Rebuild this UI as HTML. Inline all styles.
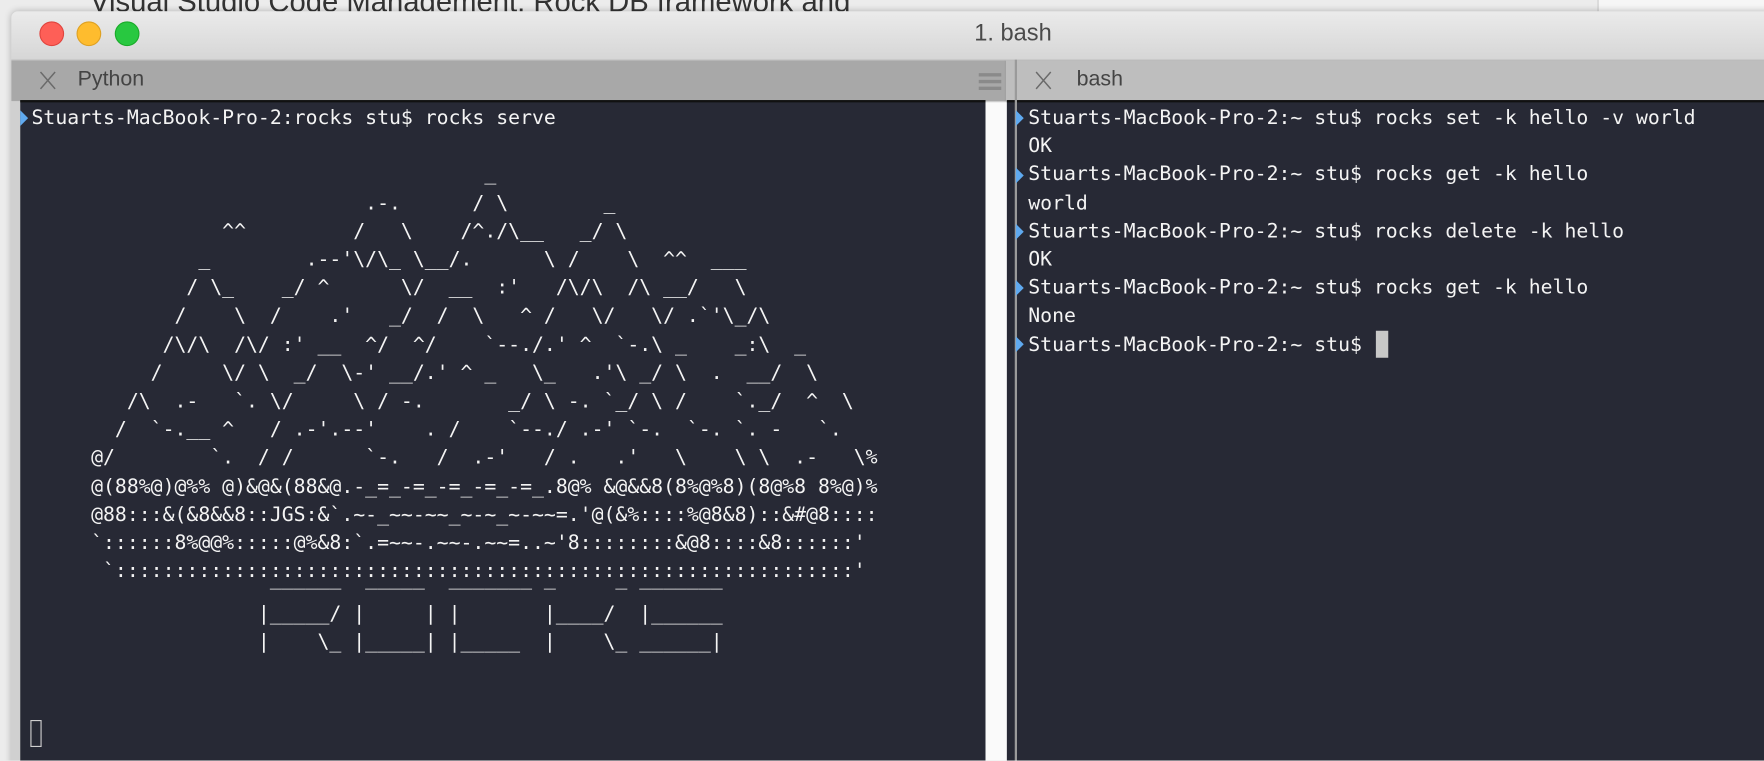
<!DOCTYPE html>
<html><head><meta charset="utf-8">
<style>
html,body{margin:0;padding:0;}
body{width:1764px;height:760px;position:relative;overflow:hidden;background:#ececec;font-family:"Liberation Sans",sans-serif;}
#wrap{position:absolute;left:0;top:0;width:1568px;height:676px;transform:scale(1.125);transform-origin:0 0;overflow:hidden;}
.bgtext{position:absolute;left:80px;top:-14px;font-size:26px;color:#333;white-space:nowrap;}
.bgright{position:absolute;left:1420px;top:0;width:148px;height:12px;background:#f6f6f6;border-left:1px solid #ccc;}
.win{position:absolute;left:10px;top:10px;width:1570px;height:680px;background:#d8d8d8;border-radius:6px 0 0 0;box-shadow:0 0 6px rgba(0,0,0,.25);overflow:hidden;}
.title{position:absolute;left:0;top:0;width:100%;height:43px;background:linear-gradient(#ebebeb,#d6d6d6);border-bottom:1px solid #b5b5b5;}
.tl{position:absolute;top:9px;width:20px;height:20px;border-radius:50%;}
.ttext{position:absolute;left:856px;top:8px;font-size:21px;color:#4a4a4a;}
.tabL{position:absolute;left:0;top:44px;width:883px;height:36px;background:#a8a8a8;}
.tabR{position:absolute;left:883px;top:44px;width:690px;height:36px;background:#bebebe;border-left:1px solid #999;}
.tabtxt{position:absolute;top:6px;font-size:19px;color:#444;}
.x{position:absolute;top:9px;}
.term{position:absolute;top:89px;height:600px;background:#272935;border-top:2px solid #111;}
pre{margin:0;position:absolute;font-family:"DejaVu Sans Mono","Liberation Mono",monospace;font-size:17.6px;line-height:25.2px;color:#f4f4f4;white-space:pre;}
.tri{position:absolute;width:0;height:0;border-top:7px solid transparent;border-bottom:7px solid transparent;border-left:7px solid #5fa9ef;}
</style></head><body>
<div id="wrap">
<div class="bgtext">Visual Studio Code Management: Rock DB framework and</div>
<div class="bgright"></div>
<div class="win">
  <div class="title">
    <div class="tl" style="left:25px;background:#fe5f57;border:1px solid #e0443e"></div>
    <div class="tl" style="left:58px;background:#febc2e;border:1px solid #dea123"></div>
    <div class="tl" style="left:92px;background:#28c840;border:1px solid #1aab29"></div>
    <div class="ttext">1. bash</div>
  </div>
  <div class="tabL">
    <svg class="x" style="left:25px" width="15" height="17"><path d="M1 1L14 16M14 1L1 16" stroke="#6a6a6a" stroke-width="1.3"/></svg>
    <div class="tabtxt" style="left:59px">Python</div>
    <div style="position:absolute;left:860px;top:11px;width:20px;height:3px;background:#8a8a8a;box-shadow:0 6px 0 #8a8a8a,0 12px 0 #8a8a8a"></div>
  </div>
  <div class="tabR">
    <svg class="x" style="left:26px" width="15" height="17"><path d="M1 1L14 16M14 1L1 16" stroke="#6a6a6a" stroke-width="1.3"/></svg>
    <div class="tabtxt" style="left:63px">bash</div>
  </div>
</div>
<div style="position:absolute;left:10px;top:90px;width:8px;height:600px;background:#d0d0d0"></div>
<div class="term" style="left:18px;width:858px"></div>
<div style="position:absolute;left:876px;top:91px;width:19px;height:600px;background:#fafafa"></div>
<div class="term" style="left:895px;width:680px"></div>
<div style="position:absolute;left:902px;top:53px;width:2px;height:640px;background:#9a9a9a"></div>

<div class="tri" style="left:18px;top:98px"></div>
<pre style="left:28px;top:93px">Stuarts-MacBook-Pro-2:rocks stu$ rocks serve

                                      _
                            .-.      / \        _
                ^^         /   \    /^./\__   _/ \
              _        .--'\/\_ \__/.      \ /    \  ^^  ___
             / \_    _/ ^      \/  __  :'   /\/\  /\ __/   \
            /    \  /    .'   _/  /  \   ^ /   \/   \/ .`'\_/\
           /\/\  /\/ :' __  ^/  ^/    `--./.' ^  `-.\ _    _:\  _
          /     \/ \  _/  \-' __/.' ^ _   \_   .'\ _/ \  .  __/  \
        /\  .-   `. \/     \ / -.       _/ \ -. `_/ \ /    `._/  ^  \
       /  `-.__ ^   / .-'.--'    . /    `--./ .-' `-.  `-. `. -   `.
     @/        `.  / /      `-.   /  .-'   / .   .'   \    \ \  .-   \%
     @(88%@)@%% @)&amp;@&amp;(88&amp;@.-_=_-=_-=_-=_-=_.8@% &amp;@&amp;&amp;8(8%@%8)(8@%8 8%@)%
     @88:::&amp;(&amp;8&amp;&amp;8::JGS:&amp;`.~-_~~-~~_~-~_~-~~=.'@(&amp;%::::%@8&amp;8)::&amp;#@8::::
     `::::::8%@@%:::::@%&amp;8:`.=~~-.~~-.~~=..~'8::::::::&amp;@8::::&amp;8::::::'
      `::::::::::::::::::::::::::::::::::::::::::::::::::::::::::::::'</pre>
<pre style="left:28px;top:503px">                    ______  _____  _______ _     _ _______</pre>
<pre style="left:28px;top:534px">                   |_____/ |     | |       |____/  |______
                   |    \_ |_____| |_____  |    \_ ______|</pre>
<div style="position:absolute;left:27px;top:640px;width:8px;height:22px;border:1.5px solid #cfcfcf"></div>

<div class="tri" style="left:903px;top:98px"></div>
<div class="tri" style="left:903px;top:149px"></div>
<div class="tri" style="left:903px;top:199px"></div>
<div class="tri" style="left:903px;top:249px"></div>
<div class="tri" style="left:903px;top:299px"></div>
<pre style="left:914px;top:93px">Stuarts-MacBook-Pro-2:~ stu$ rocks set -k hello -v world
OK
Stuarts-MacBook-Pro-2:~ stu$ rocks get -k hello
world
Stuarts-MacBook-Pro-2:~ stu$ rocks delete -k hello
OK
Stuarts-MacBook-Pro-2:~ stu$ rocks get -k hello
None
Stuarts-MacBook-Pro-2:~ stu$ </pre>
<div style="position:absolute;left:1223px;top:294px;width:11px;height:24px;background:#c8c8c8"></div>
</div>
</body></html>
